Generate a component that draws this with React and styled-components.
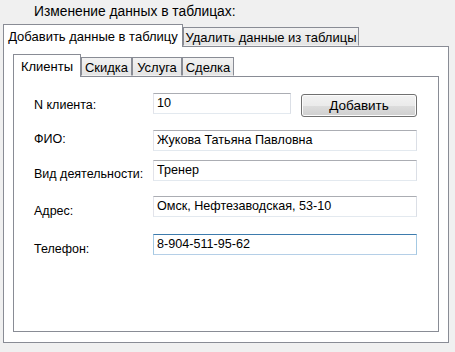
import styled, { createGlobalStyle } from "styled-components";

const GlobalStyle = createGlobalStyle`
  body {
    margin: 0;
    background-color: #f0f0f0;
    font-family: "Liberation Sans", Arial, sans-serif;
    color: #000;
  }
`;

const Page = styled.div`
  width: 455px;
  height: 352px;
  overflow: hidden;
  background-color: #f0f0f0;
`;

const Header = styled.div`
  box-sizing: border-box;
  height: 24px;
  padding: 4px 0 0 34px;
  font-size: 13.8px;
  line-height: 15px;
`;

const TabControl = styled.div`
  width: ${(p) => p.$width}px;
  margin-left: ${(p) => p.$left || 0}px;
`;

const TabStrip = styled.div`
  display: flex;
  align-items: flex-end;
  height: 22px;
`;

const Tab = styled.div`
  box-sizing: border-box;
  width: ${(p) => p.$width}px;
  height: ${(p) => (p.$active ? 23 : 19)}px;
  margin-bottom: ${(p) => (p.$active ? -1 : 0)}px;
  padding-top: ${(p) => (p.$active ? 4 : 2)}px;
  position: relative;
  z-index: ${(p) => (p.$active ? 1 : 0)};
  border: 1px solid #898c95;
  border-bottom: ${(p) => (p.$active ? "none" : "1px solid transparent")};
  background: ${(p) =>
    p.$active ? "#ffffff" : "linear-gradient(#f2f2f2, #e4e4e4)"};
  text-align: center;
  font-size: 13px;
  line-height: 15px;
  white-space: nowrap;
`;

const Panel = styled.div`
  box-sizing: border-box;
  height: ${(p) => p.$height}px;
  padding: ${(p) => p.$pad};
  background-color: #ffffff;
  border: 1px solid #898c95;
`;

const Row = styled.div`
  display: flex;
  align-items: flex-start;
  height: 21px;
  margin-top: ${(p) => p.$gap}px;
`;

const Label = styled.div`
  width: 119px;
  margin-top: ${(p) => p.$shift}px;
  font-size: 12.5px;
  line-height: 15px;
`;

const TextBox = styled.input`
  box-sizing: border-box;
  width: ${(p) => p.$width}px;
  height: 21px;
  margin: 0;
  padding: 0 3px 2px 3px;
  font-family: "Liberation Sans", Arial, sans-serif;
  font-size: 12.6px;
  line-height: 15px;
  color: #000;
  background: #ffffff;
  border: 1px solid ${(p) => (p.$focused ? "#b5cfe7" : "#e3e9ef")};
  border-top-color: ${(p) => (p.$focused ? "#3d7bad" : "#abadb3")};
  border-left-color: ${(p) => (p.$focused ? "#a4c9e3" : "#e2e3ea")};
  border-right-color: ${(p) => (p.$focused ? "#a4c9e3" : "#dbdfe6")};
  outline: none;
`;

const Button = styled.button`
  box-sizing: border-box;
  width: 116px;
  height: 23px;
  margin: 1px 0 0 10px;
  padding: 0;
  font-family: "Liberation Sans", Arial, sans-serif;
  font-size: 13.5px;
  color: #000;
  border: 1px solid #707070;
  border-radius: 3px;
  box-shadow: inset 0 0 0 1px #fcfcfc;
  background: linear-gradient(#f2f2f2 0%, #ebebeb 50%, #dddddd 51%, #cfcfcf 100%);
`;

const fields = [
  { label: "ФИО:", value: "Жукова Татьяна Павловна", gap: 16, shift: 2 },
  { label: "Вид деятельности:", value: "Тренер", gap: 9, shift: 7 },
  { label: "Адрес:", value: "Омск, Нефтезаводская, 53-10", gap: 15, shift: 8 },
  { label: "Телефон:", value: "8-904-511-95-62", gap: 17, shift: 8, focused: true },
];

const App = () => {
  return (
    <Page>
      <GlobalStyle />
      <Header>Изменение данных в таблицах:</Header>
      <TabControl $width={446} $left={3}>
        <TabStrip>
          <Tab $active $width={180}>Добавить данные в таблицу</Tab>
          <Tab $width={176}>Удалить данные из таблицы</Tab>
        </TabStrip>
        <Panel $height={297} $pad="7px 9px 0 9px">
          <TabControl $width={426}>
            <TabStrip>
              <Tab $active $width={68}>Клиенты</Tab>
              <Tab $width={51}>Скидка</Tab>
              <Tab $width={50}>Услуга</Tab>
              <Tab $width={52}>Сделка</Tab>
            </TabStrip>
            <Panel $height={256} $pad="0 0 0 20px">
              <Row $gap={16}>
                <Label $shift={5}>N клиента:</Label>
                <TextBox $width={138} readOnly value="10" />
                <Button>Добавить</Button>
              </Row>
              {fields.map((f) => (
                <Row key={f.label} $gap={f.gap}>
                  <Label $shift={f.shift}>{f.label}</Label>
                  <TextBox $width={264} $focused={f.focused} readOnly value={f.value} />
                </Row>
              ))}
            </Panel>
          </TabControl>
        </Panel>
      </TabControl>
    </Page>
  );
};

export default App;
